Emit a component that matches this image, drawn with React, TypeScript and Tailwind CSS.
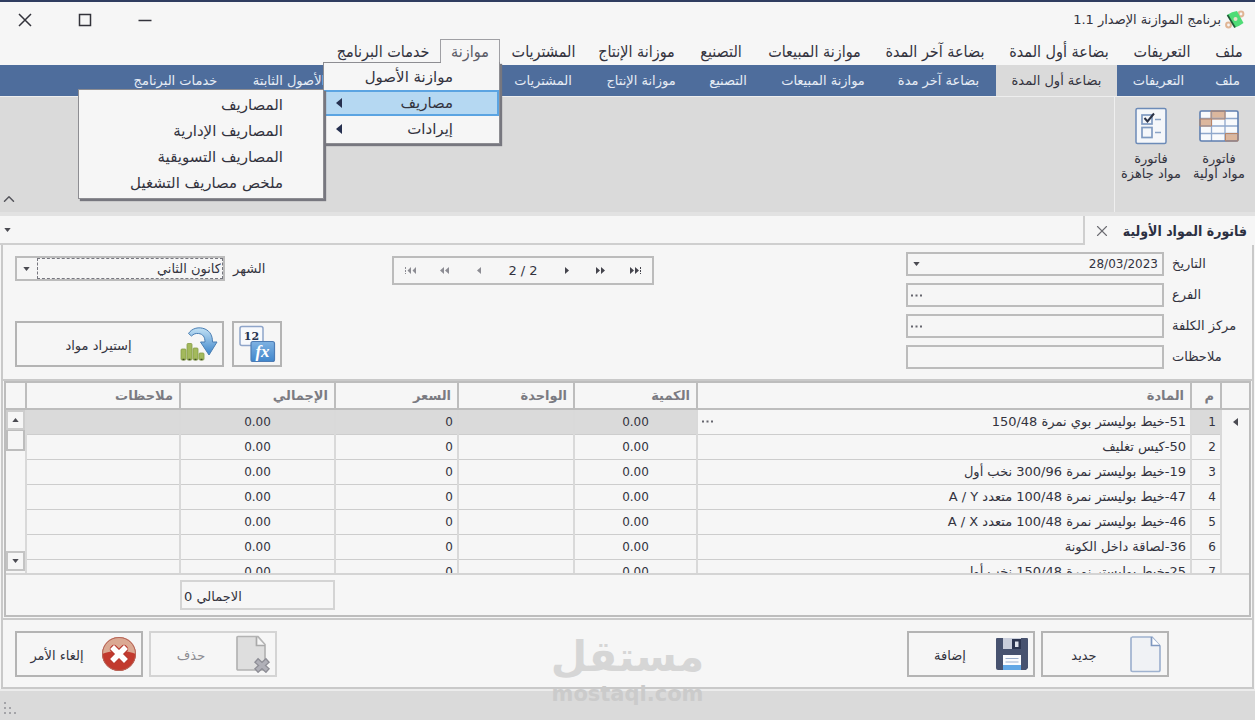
import React, { useState } from "react";
import { ChevronUp, X } from "lucide-react";

const MENU = [
  { label: "ملف", width: "w-[52px]" },
  { label: "التعريفات", width: "w-[82px]" },
  { label: "بضاعة أول المدة", width: "w-[124px]" },
  { label: "بضاعة آخر المدة", width: "w-[124px]" },
  { label: "موازنة المبيعات", width: "w-[117px]" },
  { label: "التصنيع", width: "w-[70px]" },
  { label: "موزانة الإنتاج", width: "w-[99px]" },
  { label: "المشتريات", width: "w-[87px]" },
  { label: "موازنة", width: "w-[60px]" },
  { label: "خدمات البرنامج", width: "w-[114px]" },
];

const TABS = [
  { label: "ملف", width: "w-[55px]" },
  { label: "التعريفات", width: "w-[83px]" },
  { label: "بضاعة أول المدة", width: "w-[121px]" },
  { label: "بضاعة آخر مدة", width: "w-[115px]" },
  { label: "موازنة المبيعات", width: "w-[116px]" },
  { label: "التصنيع", width: "w-[74px]" },
  { label: "موزانة الإنتاج", width: "w-[100px]" },
  { label: "المشتريات", width: "w-[96px]" },
  { label: "الأصول الثابتة", width: "mr-[152px] w-[108px]" },
  { label: "خدمات البرنامج", width: "w-[119px]" },
];

const SUBMENU = ["المصاريف", "المصاريف الإدارية", "المصاريف التسويقية", "ملخص مصاريف التشغيل"];

const ROWS = [
  "51-خيط بوليستر بوي نمرة 150/48",
  "50-كيس تغليف",
  "19-خيط بوليستر نمرة 300/96 نخب أول",
  "47-خيط بوليستر نمرة 100/48 متعدد A / Y",
  "46-خيط بوليستر نمرة 100/48 متعدد A / X",
  "36-لصاقة داخل الكونة",
  "25-خيط بوليستر نمرة 150/48 نخب أول",
];

function AppIcon() {
  return (
    <svg viewBox="0 0 20 20" className="h-5 w-5" aria-hidden="true">
      <g fill="none" stroke="#e0b595" strokeWidth="2">
        <circle cx="16" cy="4" r="2.400" />
        <circle cx="3.500" cy="15" r="2.400" />
      </g>
      <path d="M2 5Q7 1.500 12 1l6.500 12Q14.500 16 10 17.500z" fill="#4fdc76" />
      <path d="M2.500 5l7.500 12.500" stroke="#1f5a36" strokeWidth="1.700" />
      <circle cx="10.500" cy="9" r="2" fill="#e8e0c8" />
    </svg>
  );
}

function TableIcon() {
  return (
    <svg viewBox="0 0 40 34" className="h-[34px] w-10" aria-hidden="true">
      <rect x="1" y="2" width="38" height="30" rx="1.5" fill="#f8fafc" />
      <path d="M12 2h14v8H12zM1 10h12v7H1zM26 24h13v8H26z" fill="#dcb79d" />
      <path d="M12.5 2v30M26 2v30M1 9.500h38M1 17h38M1 24.500h38" stroke="#8fa8cc" strokeWidth="1.3" />
      <rect x="1" y="2" width="38" height="30" rx="1.500" fill="none" stroke="#5f7fb0" strokeWidth="1.6" />
      <path d="M12 2h14v8H12z M1 10h11.500v7H1zM26.500 24.500H39V32H26.500z" fill="none" stroke="#b98465" strokeWidth="1" />
    </svg>
  );
}

function ChecklistIcon() {
  return (
    <svg viewBox="0 0 34 38" className="h-[38px] w-[34px]" aria-hidden="true">
      <rect x="2" y="1.500" width="30" height="35" rx="1.500" fill="#f5f7fa" stroke="#6c8bb8" strokeWidth="1.500" />
      <rect x="8" y="8" width="10" height="9" fill="none" stroke="#7f9ac0" strokeWidth="1.700" />
      <rect x="8" y="20.500" width="10" height="10" fill="none" stroke="#7f9ac0" strokeWidth="1.700" />
      <path d="M21 12.500h6M21 25.500h6" stroke="#8aa3c6" strokeWidth="1.700" />
      <path d="M10.500 11l3 3.500 6.500-8" fill="none" stroke="#2b3245" strokeWidth="2" />
    </svg>
  );
}

function FunctionIcon() {
  return (
    <svg viewBox="0 0 38 38" className="h-[38px] w-[38px]" aria-hidden="true">
      <defs>
        <linearGradient id="fx" x1="0" y1="0" x2="0" y2="1">
          <stop offset="0" stopColor="#7fb2e2" />
          <stop offset="1" stopColor="#3f86cc" />
        </linearGradient>
      </defs>
      <rect x="2" y="1.500" width="23" height="19" rx="2" fill="#f7f9fc" stroke="#8fa5c9" strokeWidth="1.500" />
      <rect x="13" y="16.500" width="23.500" height="20" rx="2" fill="url(#fx)" stroke="#4d7cb5" strokeWidth="1.200" />
      <text x="13.500" y="14.500" textAnchor="middle" fontFamily="DejaVu Serif, serif" fontSize="11" fontWeight="700" fill="#26334f">12</text>
      <text x="24.500" y="31.500" textAnchor="middle" fontFamily="Liberation Serif, serif" fontStyle="italic" fontSize="17" fontWeight="700" fill="#fff">fx</text>
    </svg>
  );
}

function ImportIcon() {
  return (
    <svg viewBox="0 0 38 36" className="h-9 w-[38px]" aria-hidden="true">
      <defs>
        <linearGradient id="arrow" x1="0" y1="0" x2="0" y2="1">
          <stop offset="0" stopColor="#c3e2f5" />
          <stop offset="1" stopColor="#3a83c9" />
        </linearGradient>
      </defs>
      <g fill="#a3b95c" stroke="#879c46" strokeWidth=".8">
        <rect x="1" y="23" width="5" height="11" rx="1" />
        <rect x="7" y="17.500" width="5" height="16.500" rx="1" />
        <rect x="13" y="22" width="5" height="12" rx="1" />
        <rect x="19" y="27" width="5" height="7" rx="1" />
      </g>
      <path d="M2.500 33.500h2M8.500 33.500h2M14.500 33.500h2M20.500 33.500h2" stroke="#3c4a22" strokeWidth="1.500" />
      <path d="M8.500 7.500C12 2 19 .5 25 3c5.500 2.500 7.500 7 7.500 13H37l-8 13-8.500-13H25c0-5-2-8-6.500-8.500-3-.3-5 .5-7 2.500z" fill="url(#arrow)" stroke="#4b7fb4" strokeWidth="1" />
    </svg>
  );
}

function PageIcon() {
  return (
    <svg viewBox="0 0 34 38" className="h-[38px] w-[34px]" aria-hidden="true">
      <path d="M3 2h20l8 9v24a1.500 1.500 0 0 1-1.500 1.500h-26A1.500 1.500 0 0 1 2 35V3.500A1.500 1.500 0 0 1 3.500 2z" fill="#f0f2f5" stroke="#9fb2cf" strokeWidth="1.700" />
      <path d="M22.500 2v8.500H31" fill="#fff" stroke="#8099c0" strokeWidth="1.700" />
    </svg>
  );
}

function FloppyIcon() {
  return (
    <svg viewBox="0 0 34 34" className="h-[34px] w-[34px]" aria-hidden="true">
      <path d="M2 1h30a1 1 0 0 1 1 1v29l-2 2H3a2 2 0 0 1-2-2V2a1 1 0 0 1 1-1z" fill="#47526f" />
      <path d="M8 1h18v11H8z" fill="#c9cedb" />
      <path d="M17 2h9v10h-9z" fill="#2c3550" />
      <path d="M20 4.500h3.500V10H20z" fill="#dfe3ec" />
      <path d="M8 18h18v15H8z" fill="#fbfcfe" />
      <path d="M10.500 21.500h13M10.500 25h13" stroke="#9db0cd" strokeWidth="1.200" />
      <path d="M8 28h18v5H8z" fill="#63a8e6" />
    </svg>
  );
}

function DeleteIcon() {
  return (
    <svg viewBox="0 0 36 38" className="h-[38px] w-9" aria-hidden="true">
      <path d="M3 1.500h20l7 8V35H3a1 1 0 0 1-1-1V2.500a1 1 0 0 1 1-1z" fill="#dedede" stroke="#b3b3b3" strokeWidth="1.700" />
      <path d="M21.500 2v8.500H30" fill="#f5f5f5" stroke="#a9a9a9" strokeWidth="1.700" />
      <path d="M21 25l12 11M33 25l-12 11" stroke="#8e8e96" strokeWidth="6" />
      <path d="M22 26l10 9M32 26l-10 9" stroke="#b0b0b8" strokeWidth="3.500" />
    </svg>
  );
}

function CancelIcon() {
  return (
    <svg viewBox="0 0 36 36" className="h-9 w-9" aria-hidden="true">
      <circle cx="18" cy="18" r="17" fill="#c23a2e" />
      <path d="M1 18a17 17 0 0 1 34 0c-9-4-25-4-34 0z" fill="#dba993" />
      <circle cx="18" cy="18" r="16.500" fill="none" stroke="#b5675a" strokeWidth="1" />
      <path d="M13 13l10 10M23 13L13 23" stroke="#b8392f" strokeWidth="8" strokeLinecap="round" />
      <path d="M13 13l10 10M23 13L13 23" stroke="#fff" strokeWidth="5.500" strokeLinecap="square" />
    </svg>
  );
}

function CaretDown() {
  return (
    <svg viewBox="0 0 8 5" className="h-1 w-[7px]" aria-hidden="true">
      <path d="M0 0h8L4 5z" fill="#4b4b52" />
    </svg>
  );
}

function CaretUp() {
  return (
    <svg viewBox="0 0 8 5" className="h-1 w-[7px]" aria-hidden="true">
      <path d="M0 5h8L4 0z" fill="#4b4b52" />
    </svg>
  );
}

function CaretLeft() {
  return (
    <svg viewBox="0 0 6 10" className="h-2.5 w-1.5" aria-hidden="true">
      <path d="M6 0v10L0 5z" fill="#26304f" />
    </svg>
  );
}

function Dots() {
  return (
    <svg viewBox="0 0 11 3" className="h-[3px] w-[11px]" aria-hidden="true">
      <path d="M0 .5h2v2H0zM4.500 .5h2v2h-2zM9 .5h2v2H9z" fill="#66666e" />
    </svg>
  );
}

const PAGER_PATHS = {
  first: "M6 0v7L2.500 3.500zM11 0v7L7.500 3.500z",
  prevMany: "M5 0v7L1 3.500zM10 0v7L6 3.500z",
  prev: "M4 0v7L0 3.500z",
  next: "M0 0v7L4 3.500z",
  nextMany: "M1 0v7L5 3.500zM6 0v7L10 3.500z",
  last: "M1 0v7L5 3.500zM6 0v7L10 3.500z",
};

function PagerButton({ kind, label, dim }: { kind: keyof typeof PAGER_PATHS; label: string; dim?: boolean }) {
  const color = dim ? "#8d8d94" : "#45454d";
  return (
    <button type="button" aria-label={label} className="flex w-[34px] justify-center">
      <svg viewBox={kind === "prev" || kind === "next" ? "0 0 4 7" : "0 0 12 7"} className="h-[7px]" aria-hidden="true">
        <path d={PAGER_PATHS[kind]} fill={color} />
        {kind === "first" && <path d="M.5 0v7" stroke={color} strokeDasharray="2 1" />}
        {kind === "last" && <path d="M11.500 0v7" stroke={color} strokeDasharray="2 1" />}
      </svg>
    </button>
  );
}

function Field({ id, label, value, trailing }: { id: string; label: string; value?: string; trailing?: React.ReactNode }) {
  return (
    <div className="flex items-center gap-2">
      <label htmlFor={id} className="w-[67px] text-left whitespace-nowrap">
        {label}
      </label>
      <div className="flex h-6 w-[258px] items-center border-2 border-[#bcbcbc]">
        <input id={id} defaultValue={value} className="h-full min-w-0 flex-1 bg-transparent px-1 text-right text-xs outline-none" />
        {trailing && (
          <button type="button" aria-label={label} className="flex h-full w-4 items-center justify-center">
            {trailing}
          </button>
        )}
      </div>
    </div>
  );
}

function ActionButton({ icon, label, disabled }: { icon: React.ReactNode; label: string; disabled?: boolean }) {
  return (
    <button
      type="button"
      disabled={disabled}
      className="flex h-[46px] w-[128px] items-center border-2 border-[#b4b4b4] pr-1 disabled:border-[#d4d4d4] disabled:text-[#8c8c92]"
    >
      {icon}
      <span className="flex-1 pt-1 pr-1 text-center">{label}</span>
    </button>
  );
}

function BalanceDropdown() {
  return (
    <div
      role="menu"
      className="absolute top-[22px] -right-px z-20 w-[177px] border border-[#8d8d92] bg-[#f6f6f6] py-px font-['DejaVu_Sans',sans-serif] text-[15px] shadow-[2px_2px_1px_#77777f]"
    >
      <button type="button" role="menuitem" className="flex h-[26px] w-full items-center pr-[46px] pl-3">
        موازنة الأصول
      </button>
      <div className="relative">
        <button
          type="button"
          role="menuitem"
          className="flex h-[26px] w-full items-center justify-between border-2 border-[#5ba4e2] bg-[#b5d8f2] pr-11 pl-2.5"
        >
          مصاريف
          <CaretLeft />
        </button>
        <div
          role="menu"
          className="absolute -top-px right-full z-30 w-[246px] border border-[#8d8d92] bg-[#f6f6f6] py-0.5 shadow-[2px_2px_1px_#77777f]"
        >
          {SUBMENU.map((item) => (
            <button key={item} type="button" role="menuitem" className="flex h-[26px] w-full items-center pr-10">
              {item}
            </button>
          ))}
        </div>
      </div>
      <button type="button" role="menuitem" className="flex h-[26px] w-full items-center justify-between pr-[46px] pl-3">
        إيرادات
        <CaretLeft />
      </button>
    </div>
  );
}

function ItemsTable() {
  const th = "h-[26px] border-b-2 border-l-2 border-[#bdbdbd] px-1.5 py-0 text-right font-bold text-[#7b7b82]";
  const td = "border-b border-l-2 border-b-[#cdcdcd] border-l-[#d9d9d9] px-1 py-0";
  return (
    <table className="w-full table-fixed border-collapse">
      <colgroup>
        <col className="w-7" />
        <col className="w-[30px]" />
        <col />
        <col className="w-[123px]" />
        <col className="w-[116px]" />
        <col className="w-[123px]" />
        <col className="w-[155px]" />
        <col className="w-[154px]" />
      </colgroup>
      <thead>
        <tr>
          <th className={th} aria-label="المؤشر" />
          <th className={th}>م</th>
          <th className={th}>المادة</th>
          <th className={th}>الكمية</th>
          <th className={th}>الواحدة</th>
          <th className={th}>السعر</th>
          <th className={th}>الإجمالي</th>
          <th className={th}>ملاحظات</th>
        </tr>
      </thead>
      <tbody>
        {ROWS.map((name, i) => {
          const fill = i === 0 ? " bg-[#dadada]" : "";
          return (
            <tr key={name} className="h-[25px]">
              <td className="border-l-2 border-[#d9d9d9] text-center">
                {i === 0 && (
                  <svg viewBox="0 0 5 8" className="mx-auto h-2 w-[5px]" aria-hidden="true">
                    <path d="M5 0v8L0 4z" fill="#4b4b52" />
                  </svg>
                )}
              </td>
              <td className={td + fill + " text-xs"}>{i + 1}</td>
              <td className={td}>
                <div className="flex items-center justify-between">
                  <span className="whitespace-nowrap">{name}</span>
                  {i === 0 && (
                    <button type="button" aria-label="اختيار المادة">
                      <Dots />
                    </button>
                  )}
                </div>
              </td>
              <td className={td + fill + " text-center text-xs"}>0.00</td>
              <td className={td + fill} />
              <td className={td + fill + " text-xs"}>0</td>
              <td className={td + fill + " text-center text-xs"}>0.00</td>
              <td className={td + fill} />
            </tr>
          );
        })}
      </tbody>
    </table>
  );
}

export default function App() {
  const [month, setMonth] = useState("كانون الثاني");
  return (
    <div
      dir="rtl"
      className="flex h-screen min-h-[720px] flex-col overflow-hidden bg-[#f6f6f6] font-['DejaVu_Sans',sans-serif] text-[13px] leading-4 text-[#33333e]"
    >
      <header className="border-t-2 border-[#2f3d60]">
        <div className="flex h-9 items-center justify-between pr-2.5 pl-[17px]">
          <h1 className="flex items-center gap-1">
            <AppIcon />
            برنامج الموازنة الإصدار 1.1
          </h1>
          <div className="flex items-center gap-11">
            <button type="button" aria-label="تصغير">
              <svg viewBox="0 0 16 16" className="h-4 w-4"><path d="M1.500 8.500h13" stroke="#33333b" strokeWidth="1.500" /></svg>
            </button>
            <button type="button" aria-label="تكبير">
              <svg viewBox="0 0 16 16" className="h-4 w-4"><rect x="2.500" y="2.500" width="11" height="11" fill="none" stroke="#33333b" strokeWidth="1.500" /></svg>
            </button>
            <button type="button" aria-label="إغلاق">
              <svg viewBox="0 0 16 16" className="h-4 w-4"><path d="M2 2l12 12M14 2L2 14" stroke="#33333b" strokeWidth="1.500" /></svg>
            </button>
          </div>
        </div>
        <nav className="flex h-[27px] font-['DejaVu_Sans_Condensed','DejaVu_Sans',sans-serif] text-base leading-5">
          {MENU.map(({ label, width }) =>
            label === "موازنة" ? (
              <div key={label} className={"relative mt-px h-6 border border-b-0 border-[#a0a0a4] " + width}>
                <button type="button" aria-expanded="true" className="relative z-30 h-full w-full bg-[#f6f6f6] text-[#5c5c68]">
                  {label}
                </button>
                <BalanceDropdown />
              </div>
            ) : (
              <button key={label} type="button" className={"whitespace-nowrap " + width}>
                {label}
              </button>
            ),
          )}
        </nav>
      </header>

      <div role="tablist" className="flex h-[31px] bg-[#4e6d9c] text-[#e6ecf5]">
        {TABS.map(({ label, width }, i) => (
          <button
            key={label}
            type="button"
            role="tab"
            aria-selected={i === 2}
            className={
              "whitespace-nowrap " + width + (i === 2 ? " bg-[#dadada] text-[#33333e]" : "")
            }
          >
            {label}
          </button>
        ))}
      </div>

      <section className="flex h-[120px] items-stretch justify-between border-t border-b-4 border-t-[#eeeeee] border-b-[#e2e2e2] bg-[#dadada]">
        <div className="flex border-l border-[#efefef] px-0.5">
          <button type="button" className="flex w-[68px] flex-col items-center pt-3 leading-[15px]">
            <TableIcon />
            <span className="mt-2 whitespace-nowrap">فاتورة<br />مواد أولية</span>
          </button>
          <button type="button" className="flex w-[68px] flex-col items-center pt-2.5 leading-[15px]">
            <ChecklistIcon />
            <span className="mt-1.5 whitespace-nowrap">فاتورة<br />مواد جاهزة</span>
          </button>
        </div>
        <button type="button" aria-label="طي الشريط" className="self-end pb-1">
          <ChevronUp className="h-[18px] w-[18px] text-[#55555c]" />
        </button>
      </section>

      <div className="flex h-[29px] items-stretch justify-between">
        <div className="flex items-center gap-3 border-l-2 border-[#cfcfcf] pr-2 pl-2">
          <span className="font-['DejaVu_Sans_Condensed','DejaVu_Sans',sans-serif] text-sm font-bold text-[#2c3042]">فاتورة المواد الأولية</span>
          <button type="button" aria-label="إغلاق الفاتورة">
            <X className="h-[18px] w-[18px] text-[#6c6c72]" strokeWidth={1.5} />
          </button>
        </div>
        <div className="flex flex-1 items-center justify-end border-b-2 border-[#cfcfcf] pl-1">
          <button type="button" aria-label="قائمة النوافذ"><CaretDown /></button>
        </div>
      </div>

      <main className="mx-px flex min-h-0 flex-1 flex-col border-x-2 border-b-2 border-[#c9c9c9]">
        <form className="flex h-[136px] shrink-0 items-start border-b-2 border-[#c9c9c9] pt-[7px] pr-[13px] pl-3">
          <div className="flex flex-col gap-[7px]">
            <Field id="date" label="التاريخ" value="28/03/2023" trailing={<CaretDown />} />
            <Field id="branch" label="الفرع" trailing={<Dots />} />
            <Field id="center" label="مركز الكلفة" trailing={<Dots />} />
            <Field id="notes" label="ملاحظات" />
          </div>
          <div dir="ltr" className="mt-1 mr-auto ml-[110px] flex h-[29px] w-[262px] items-center justify-center border-2 border-[#bcbcbc]">
            <PagerButton kind="first" label="الأول" dim />
            <PagerButton kind="prevMany" label="الصفحة السابقة" dim />
            <PagerButton kind="prev" label="السابق" dim />
            <span className="w-[54px] text-center">2 / 2</span>
            <PagerButton kind="next" label="التالي" />
            <PagerButton kind="nextMany" label="الصفحة التالية" />
            <PagerButton kind="last" label="الأخير" />
          </div>
          <div className="mt-1 flex w-[267px] flex-col gap-10">
            <div className="flex items-center justify-end gap-2">
              <label htmlFor="month">الشهر</label>
              <div className="relative h-[25px] w-[210px] border-2 border-[#bcbcbc]">
                <select
                  id="month"
                  value={month}
                  onChange={(e) => setMonth(e.target.value)}
                  className="h-full w-full appearance-none bg-transparent pr-0.5 outline-none"
                >
                  <option>كانون الثاني</option>
                  <option>شباط</option>
                  <option>آذار</option>
                </select>
                <span className="pointer-events-none absolute inset-y-0 right-0 left-5 border border-dashed border-[#77777f]" />
                <span className="pointer-events-none absolute inset-y-0 left-1.5 flex items-center"><CaretDown /></span>
              </div>
            </div>
            <div className="flex gap-2">
              <button type="button" aria-label="حساب" className="flex h-[46px] w-[50px] items-center justify-center border-2 border-[#b4b4b4]">
                <FunctionIcon />
              </button>
              <button type="button" className="flex h-[46px] flex-1 items-center border-2 border-[#b4b4b4] pr-1">
                <ImportIcon />
                <span className="flex-1 pt-1 text-center">إستيراد مواد</span>
              </button>
            </div>
          </div>
        </form>

        <section className="mx-px flex min-h-0 flex-1 flex-col border-2 border-[#bdbdbd]">
          <div className="flex min-h-0 flex-1 overflow-hidden">
            <div className="min-w-0 flex-1 overflow-hidden">
              <ItemsTable />
            </div>
            <div className="flex w-[19px] flex-col">
              <div className="h-[27px] shrink-0 border-b-2 border-[#bdbdbd]" />
              <button type="button" aria-label="أعلى" className="flex h-5 shrink-0 items-center justify-center border-2 border-[#cdcdcd]"><CaretUp /></button>
              <div className="h-[21px] shrink-0 border-2 border-t border-[#bdbdbd]" />
              <div className="flex-1" />
              <button type="button" aria-label="أسفل" className="mb-0.5 flex h-5 shrink-0 items-center justify-center border-2 border-[#c4c4c4]"><CaretDown /></button>
            </div>
          </div>
          <div className="flex h-[42px] shrink-0 items-center justify-end border-t-2 border-[#d4d4d4] pl-[174px]">
            <output className="flex h-[30px] w-[155px] items-center justify-end border-2 border-[#d4d4d4] px-0.5 pt-1">
              الاجمالي 0
            </output>
          </div>
        </section>

        <footer className="relative mt-px flex h-[69px] shrink-0 items-center justify-between border-t-2 border-[#c9c9c9] pr-[83px] pl-3">
          <div className="flex gap-1.5">
            <ActionButton icon={<PageIcon />} label="جديد" />
            <ActionButton icon={<FloppyIcon />} label="إضافة" />
          </div>
          <div className="pointer-events-none absolute top-2.5 left-1/2 z-10 flex -translate-x-1/2 flex-col items-center font-bold text-[#d6d6d6]">
            <span className="text-[42px] leading-[54px]">مستقل</span>
            <span className="text-[21px] leading-5 text-[#cbcbcb]">mostaql.com</span>
          </div>
          <div className="flex gap-1.5">
            <ActionButton icon={<DeleteIcon />} label="حذف" disabled />
            <ActionButton icon={<CancelIcon />} label="إلغاء الأمر" />
          </div>
        </footer>
      </main>

      <div className="flex h-[31px] shrink-0 items-end justify-end border-t-2 border-[#ececec] bg-[#dadada] p-1">
        <svg viewBox="0 0 14 14" className="h-3.5 w-3.5" aria-hidden="true">
          <path d="M0 0h2v2H0zM0 5h2v2H0zM5 5h2v2H5zM0 10h2v2H0zM5 10h2v2H5zM10 10h2v2h-2z" fill="#a4a4a8" />
        </svg>
      </div>
    </div>
  );
}
